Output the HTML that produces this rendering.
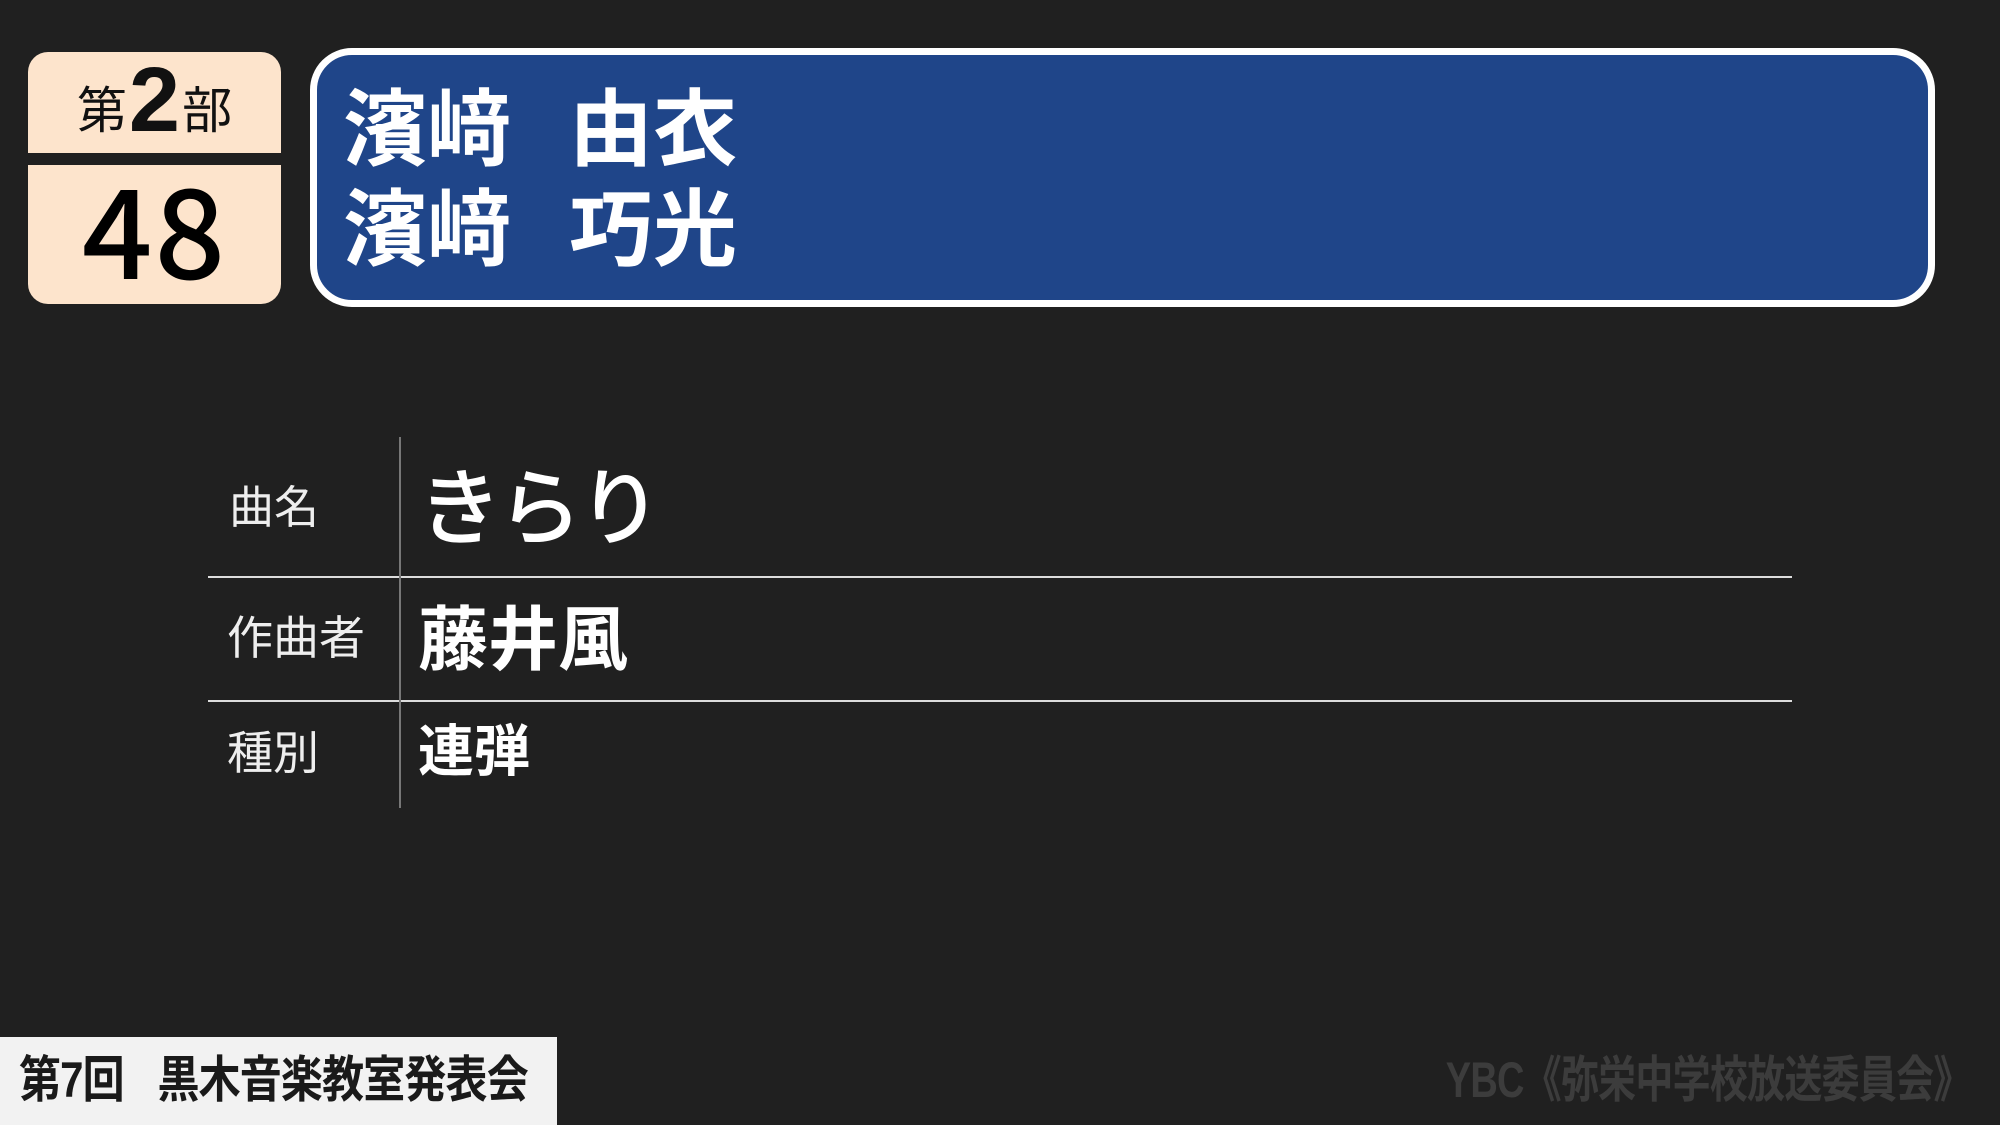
<!DOCTYPE html>
<html><head><meta charset="utf-8"><style>
html,body{margin:0;padding:0;}
body{width:2000px;height:1125px;background:#202020;position:relative;overflow:hidden;font-family:"Liberation Sans","Noto Sans CJK JP",sans-serif;}
.a{position:absolute;white-space:nowrap;}
.badge{position:absolute;left:28px;width:253px;background:#fde4cc;}
</style></head><body>
<div class="badge" style="top:52px;height:101px;border-radius:20px 20px 0 0;"></div>
<div class="badge" style="top:165px;height:139px;border-radius:0 0 20px 20px;"></div>
<div class="a" style="left:28px;width:253px;top:56px;height:101px;display:flex;align-items:center;justify-content:center;color:#111;">
<span style="font-size:50px;font-family:'Noto Sans CJK JP',sans-serif;">第</span><span style="font-size:92px;font-weight:bold;line-height:1;margin:-14px 2px 0;">2</span><span style="font-size:50px;font-family:'Noto Sans CJK JP',sans-serif;">部</span></div>
<div class="a" style="left:28px;width:253px;top:156px;height:139px;text-align:center;line-height:139px;font-size:124px;color:#000;font-family:'Noto Sans CJK JP',sans-serif;font-weight:500;letter-spacing:2px;">48</div>
<div class="a" style="left:310px;top:48px;width:1611px;height:245px;border:7px solid #fff;border-radius:42px;background:#1f4589;"></div>
<div class="a" style="left:343px;top:74px;color:#fff;font-size:84px;font-weight:bold;line-height:100px;font-family:'Noto Sans CJK JP',sans-serif;">濱﨑<span style="display:inline-block;width:58px"></span>由衣<br>濱﨑<span style="display:inline-block;width:58px"></span>巧光</div>
<div class="a" style="left:208px;top:576px;width:1584px;height:2px;background:#ddd;"></div>
<div class="a" style="left:208px;top:700px;width:1584px;height:2px;background:#ddd;"></div>
<div class="a" style="left:399px;top:437px;width:2px;height:371px;background:#777;"></div>
<div class="a" style="left:229px;top:478px;font-size:45px;color:#eee;line-height:60px;">曲名</div>
<div class="a" style="left:227px;top:608px;font-size:46px;color:#eee;line-height:60px;">作曲者</div>
<div class="a" style="left:227px;top:723px;font-size:46px;color:#eee;line-height:60px;">種別</div>
<div class="a" style="left:418px;top:448px;font-size:84px;color:#fff;line-height:110px;font-family:'Noto Sans CJK JP',sans-serif;font-weight:500;letter-spacing:-4px;">きらり</div>
<div class="a" style="left:418px;top:592px;font-size:70px;color:#fff;font-weight:bold;line-height:96px;">藤井風</div>
<div class="a" style="left:418px;top:714px;font-size:56px;color:#fff;font-weight:bold;line-height:76px;">連弾</div>
<div class="a" style="left:0;top:1037px;width:557px;height:88px;background:#f2f2f2;"></div>
<div class="a" style="left:19px;top:1050px;font-size:50px;font-weight:bold;color:#1a1a1a;line-height:60px;transform:scaleX(0.84);transform-origin:left center;letter-spacing:-1px;">第7回<span style="display:inline-block;width:40px"></span>黒木音楽教室発表会</div>
<div class="a" style="right:29px;top:1050px;font-size:50px;font-weight:bold;color:#3c3c3c;line-height:60px;transform:scaleX(0.76);transform-origin:right center;letter-spacing:-1px;">YBC《弥栄中学校放送委員会》</div>
</body></html>
